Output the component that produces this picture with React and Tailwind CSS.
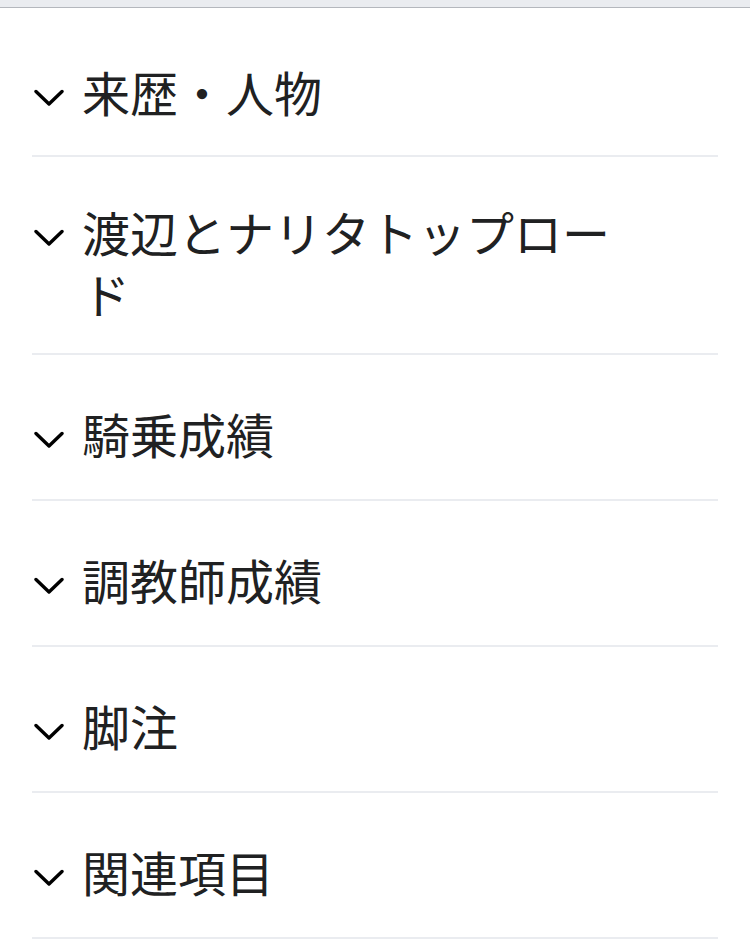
// Collapsed section list — mobile article view

const sections = [
    { title: '来歴・人物', first: true },
    { title: '渡辺とナリタトップロード', twoLine: true },
    { title: '騎乗成績' },
    { title: '調教師成績' },
    { title: '脚注' },
    { title: '関連項目' },
];

function Chevron() {
    return (
        <svg width="30" height="18" viewBox="0 0 30 18" fill="none" className="ml-[2px] mt-[3px]">
            <polyline points="2,2.5 15,15 28,2.5" stroke="#000" strokeWidth="3.4" strokeLinecap="round" strokeLinejoin="round" />
        </svg>
    );
}

function SectionRow({ title, first, twoLine }) {
    // two-line heading sits a little tighter than single-line ones
    const pad = twoLine ? 'pt-[48px] pb-[24px]' : first ? 'pt-[57px] pb-[28px]' : 'pt-[52px] pb-[30px]';
    return (
        <div className={`flex items-start border-b-2 border-[#eaecf0] ${pad}`}>
            <div className="w-[50px] h-[62px] flex items-center shrink-0">
                <Chevron />
            </div>
            <h2 className="max-w-[560px] text-[48px] leading-[62px] font-normal text-[#202122]">{title}</h2>
        </div>
    );
}

export default function App() {
    return (
        <div className="w-[750px] h-[947px] bg-white overflow-hidden" style={{ fontFamily: '"Liberation Serif", "Noto Sans CJK JP", serif' }}>
            {/* top chrome strip */}
            <div className="h-[8px] bg-[#eaecf0] border-b border-[#b4b7bd]" />
            <div className="mx-8">
                {sections.map((s) => (
                    <SectionRow key={s.title} {...s} />
                ))}
            </div>
        </div>
    );
}
